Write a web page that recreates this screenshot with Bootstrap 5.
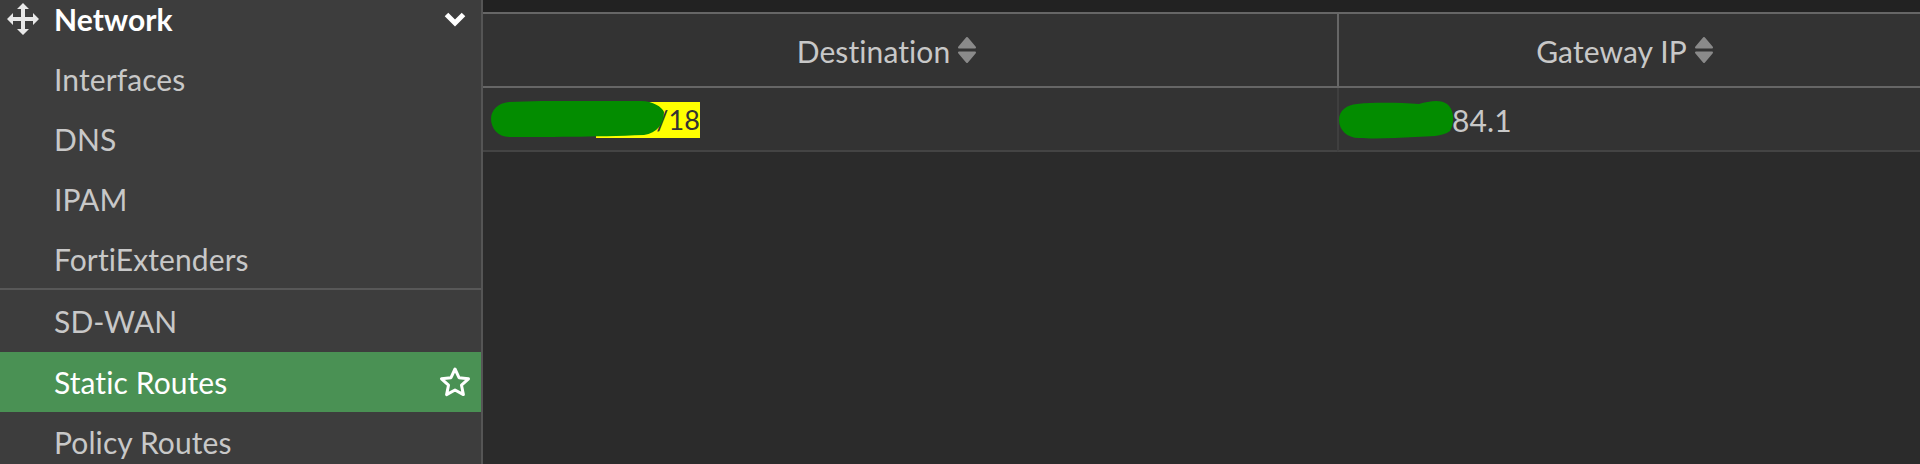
<!DOCTYPE html>
<html lang="en">
<head>
<meta charset="utf-8">
<title>Static Routes</title>
<link rel="stylesheet" href="https://cdn.jsdelivr.net/npm/bootstrap@5.3.0/dist/css/bootstrap.min.css">
<style>
html,body{height:464px;overflow:hidden;background:#2b2b2b;}
body{font-family:Lato,"Liberation Sans",sans-serif;font-size:30px;letter-spacing:.1px;color:#ccc;}
.shell{height:464px;overflow:hidden;}
.side{width:483px;flex:none;background:#3d3d3d;border-right:2px solid #555;margin-top:-11px;height:475px;overflow:hidden;}
.side-item{height:60px;flex:none;padding-left:54px;padding-right:10px;color:#c8c8c8;line-height:1;}
.side-head{color:#fff;font-weight:700;padding-left:7px;padding-right:11px;}
.side-head .mv{width:32px;height:32px;margin-right:15px;}
.side-sep{border-top:2px solid #585858;height:64px;margin-top:-1px;}
.side-on{background:#4a9154;color:#fff;}
.main{min-width:0;}
.topbar{height:14px;background:#222;border-bottom:2px solid #666;flex:none;}
.grid-t{display:grid;grid-template-columns:854px 1fr;background:#333;}
.hcell{height:74px;border-bottom:2px solid #666;color:#c8c8c8;}
.hcell+.hcell{border-left:2px solid #666;}
.hcell-a{padding-right:46px;}
.hcell-b{padding-right:9px;}
.hlabel{position:relative;top:1px;}
.bcell{height:64px;border-bottom:2px solid #444;padding-top:2px;}
.bcell+.bcell{border-left:2px solid #3f3f3f;}
.sorter{width:20px;height:28px;margin-left:7px;flex:none;}
.rest{background:#2b2b2b;}
.hit{position:relative;background:#ff0;color:#333;font-size:27px;height:36px;line-height:36px;margin-left:113px;width:104px;text-align:right;}
.blob{position:absolute;display:block;}
.b1{left:-105px;top:-1px;width:173px;height:36px;}
.gw{position:relative;padding-left:113px;color:#c8c8c8;line-height:1;}
.b2{left:0;top:-5px;width:115px;height:40px;}
</style>
</head>
<body>
<div class="shell d-flex">
  <nav class="side d-flex flex-column">
    <div class="side-item side-head d-flex align-items-center">
      <svg class="mv" viewBox="0 0 32 32" aria-hidden="true"><path fill="#e8e8e8" d="M16 0l6 6h-4v8h8v-4l6 6-6 6v-4h-8v8h4l-6 6-6-6h4v-8H6v4l-6-6 6-6v4h8V6h-4z"/></svg>
      <span>Network</span>
      <svg class="ms-auto me-1" width="22" height="16" viewBox="0 0 22 16" aria-hidden="true"><path fill="none" stroke="#fff" stroke-width="5" d="M2.500 3.500L11 12l8.500-8.500"/></svg>
    </div>
    <div class="side-item d-flex align-items-center">Interfaces</div>
    <div class="side-item d-flex align-items-center">DNS</div>
    <div class="side-item d-flex align-items-center">IPAM</div>
    <div class="side-item d-flex align-items-center">FortiExtenders</div>
    <div class="side-item side-sep d-flex align-items-center">SD-WAN</div>
    <div class="side-item side-on d-flex align-items-center">Static Routes
      <svg class="ms-auto" width="32" height="32" viewBox="0 0 32 32" aria-hidden="true"><path fill="none" stroke="#fff" stroke-width="3" stroke-linejoin="round" d="M16 3l4 8.700 9.500 1.100-7 6.400 1.900 9.400L16 24l-8.400 4.600 1.900-9.400-7-6.400 9.500-1.100z"/></svg>
    </div>
    <div class="side-item d-flex align-items-center">Policy Routes</div>
  </nav>
  <main class="main flex-grow-1 d-flex flex-column">
    <div class="topbar"></div>
    <div class="grid-t">
      <div class="hcell hcell-a d-flex align-items-center justify-content-center"><span class="hlabel">Destination</span>
        <svg class="sorter" viewBox="0 0 20 28" aria-hidden="true"><path fill="#8a8a8a" stroke="#8a8a8a" stroke-width="2" stroke-linejoin="round" d="M10 2l8 9.500H2zM2 16.500h16L10 26z"/></svg>
      </div>
      <div class="hcell hcell-b d-flex align-items-center justify-content-center"><span class="hlabel">Gateway IP</span>
        <svg class="sorter" viewBox="0 0 20 28" aria-hidden="true"><path fill="#8a8a8a" stroke="#8a8a8a" stroke-width="2" stroke-linejoin="round" d="M10 2l8 9.500H2zM2 16.500h16L10 26z"/></svg>
      </div>
      <div class="bcell d-flex align-items-center"><div class="hit"><svg class="blob b1" viewBox="0 0 173 36" aria-hidden="true"><path fill="#038c00" d="M18 1C70 -1 120 -1 150 0c12 0 21 6 23 11 0 12-7 21-20 23-50 2-100 2-135 2C7 36 0 27 0 18S7 2 18 1z"/></svg>/18</div></div>
      <div class="bcell d-flex align-items-center"><div class="gw"><svg class="blob b2" viewBox="0 0 115 40" aria-hidden="true"><path fill="#038c00" d="M18 4c20-2 45-1 62 0 10-3 22-5 28 0 7 5 8 18 3 27-8 6-20 5-35 6-18 1-40 2-56 1C8 38 0 30 0 20S8 5 18 4z"/></svg>84.1</div></div>
    </div>
    <div class="rest flex-grow-1"></div>
  </main>
</div>
<script src="https://cdn.jsdelivr.net/npm/bootstrap@5.3.0/dist/js/bootstrap.bundle.min.js"></script>
</body>
</html>
